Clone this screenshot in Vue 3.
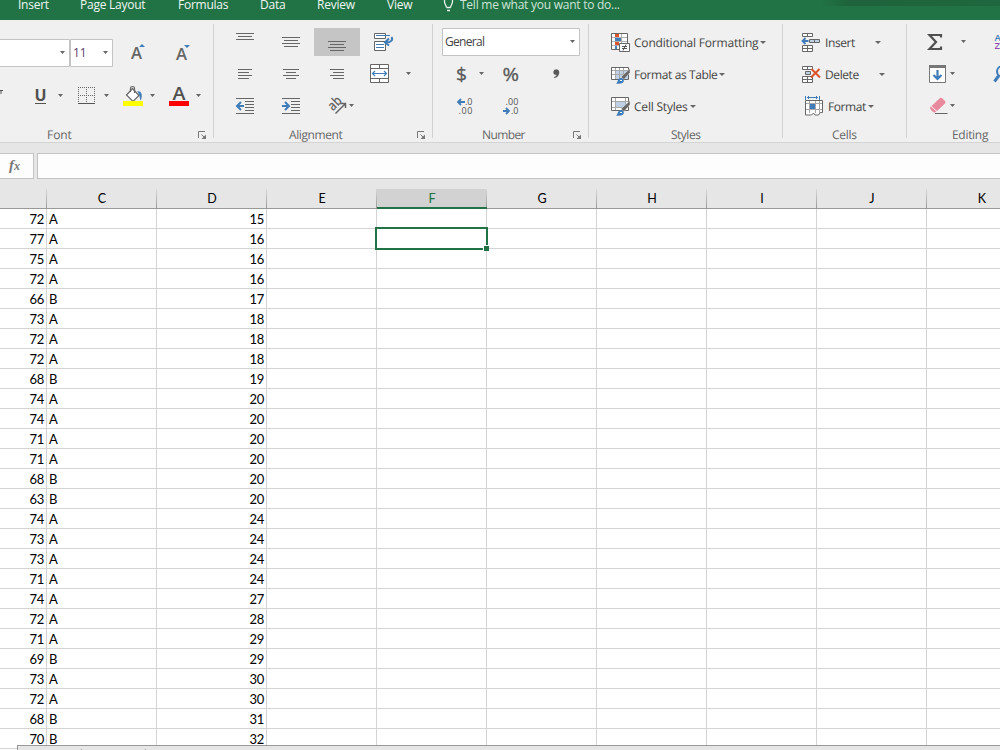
<script setup>
const tabs = [
  { name: 'Insert', w: 62 },
  { name: 'Page Layout', w: 98 },
  { name: 'Formulas', w: 82 },
  { name: 'Data', w: 57 },
  { name: 'Review', w: 70 },
  { name: 'View', w: 55 },
]
const columns = ['C', 'D', 'E', 'F', 'G', 'H', 'I', 'J', 'K']
const scores = [72, 77, 75, 72, 66, 73, 72, 72, 68, 74, 74, 71, 71, 68, 63, 74, 73, 73, 71, 74, 72, 71, 69, 73, 72, 68, 70]
const ages = [15, 16, 16, 16, 17, 18, 18, 18, 19, 20, 20, 20, 20, 20, 20, 24, 24, 24, 24, 27, 28, 29, 29, 30, 30, 31, 32]
const rows = scores.map((s, i) => ({ score: s, grade: s >= 71 ? 'A' : 'B', age: ages[i] }))
</script>

<template>
  <div class="window">
    <nav class="tabs">
      <span v-for="t in tabs" :key="t.name" :style="{ width: t.w + 'px' }">{{ t.name }}</span>
      <svg class="bulb" width="16" height="20" viewBox="442 0 16 20">
        <path d="M446.500 7.500C446 5 444.500 4 444.500 1.500V-1M450.500 7.500C451 5 452.500 4 452.500 1.500V-1M446.500 7.500h4M447 10.500h3" fill="none" stroke="#e8f2ec" stroke-width="1.300" />
      </svg>
      <span class="tell">Tell me what you want to do...</span>
    </nav>

    <section class="ribbon">
      <div class="group font">
        <svg class="art" width="213" height="102" viewBox="0 20 213 102">
          <g fill="#fff" stroke="#c3c3c3">
            <path d="M-2 39.500H69.500V66.500H-2zM70.500 39.500h42v27h-42z" />
          </g>
          <g class="arrow">
            <path d="M60 51h5l-2.500 3zM103 51h5l-2.500 3zM58 94h5l-2.500 3zM104 94h5l-2.500 3zM150 94h5l-2.500 3zM196 94h5l-2.500 3z" />
          </g>
          <text x="73" y="57" font-size="12" fill="#63406d">11</text>
          <g fill="#666" font-weight="600">
            <text x="131" y="59" font-size="15.500" textLength="11" lengthAdjust="spacingAndGlyphs">A</text>
            <text x="176" y="60" font-size="15.500" textLength="11" lengthAdjust="spacingAndGlyphs">A</text>
          </g>
          <path d="M139 47h6l-3-3zM184 45h6l-3 3z" fill="#3f7cb8" />
          <path d="M0 90.500h3M1 90v4" stroke="#555" fill="none" />
          <text x="34.500" y="101" font-size="16" font-weight="700" fill="#505050" textLength="12" lengthAdjust="spacingAndGlyphs">U</text>
          <path d="M35 103.500h11" stroke="#555" />
          <g fill="none" stroke="#666" stroke-dasharray="1 1" shape-rendering="crispEdges">
            <path d="M78 87.500h17M78 95.500h17M78.500 87v16M86.500 87v16M94.500 87v16" />
          </g>
          <path d="M78 103.500h17" stroke="#555" />
          <path d="M132.500 88.500l6.500 7-6 6-6.500-6.500z" fill="#fff" stroke="#666" stroke-width="1.200" />
          <path d="M130.500 92v-4c0-2 4-2 4 0v5" fill="none" stroke="#666" stroke-width="1.200" />
          <path d="M137.500 91c4 0 5.500 4 3.300 9.500c-1-1-1-4-1.500-5z" fill="#3f7cb8" />
          <path d="M123 101h20v5h-20z" fill="#ff0" />
          <text x="172.500" y="100" font-size="17.500" font-weight="600" fill="#505050" textLength="13" lengthAdjust="spacingAndGlyphs">A</text>
          <path d="M169 101h20v5h-20z" fill="#f00" />
        </svg>
        <footer class="f-font">Font</footer>
        <svg class="launch" width="9" height="9"><path d="M.5 7V.5H7M3.500 3.500l3 3" fill="none" stroke="#777" /><path d="M8 3.500V8H3.500z" fill="#777" /></svg>
      </div>

      <div class="group alignment">
        <svg class="art" width="219" height="102" viewBox="214 20 219 102">
          <path d="M314 28h46v28h-46z" fill="#c5c5c5" />
          <g stroke="#666" fill="none" shape-rendering="crispEdges">
            <path d="M236 33.500h18M238 36.500h14M236 39.500h18" />
            <path d="M282 37.500h18M284 40.500h14M282 43.500h18M284 46.500h14" />
            <path d="M328 41.500h18M330 44.500h14M328 47.500h18M330 50.500h14" />
            <path d="M238 69.500h14M238 72.500h11M238 75.500h14M238 78.500h11" />
            <path d="M283 69.500h16M286 72.500h10M283 75.500h16M286 78.500h10" />
            <path d="M330 69.500h14M333 72.500h11M330 75.500h14M333 78.500h11" />
            <path d="M236 98.500h18M245 101.500h9M245 104.500h9M245 107.500h9M245 110.500h9M236 113.500h18" />
            <path d="M282 98.500h18M291 101.500h9M291 104.500h9M291 107.500h9M291 110.500h9M282 113.500h18" />
          </g>
          <g stroke="#3f7cb8" fill="none" stroke-width="2">
            <path d="M237 106h7M241 102l-4 4 4 4" />
            <path d="M282 106h7M285 102l4 4-4 4" />
          </g>
          <g fill="#fff" stroke="#666">
            <path d="M374.500 33.500h11v5h-11zM374.500 41.500h11v9h-11z" />
            <path d="M370.500 64.500h18v18h-18z" />
            <path d="M370 68.500h19M370 78.500h19M379.500 64v4M379.500 79v4" />
          </g>
          <path d="M376 35.500h14M376 44.500h8M376 47.500h8M372.500 73.500h14M375 71l-2.500 2.500L375 76M384 71l2.500 2.500L384 76" stroke="#3f7cb8" stroke-width="1.200" fill="none" />
          <path d="M391.500 37c2 3-1 5.500-5 5.500M389 38.500l-4 4 4 3" stroke="#3f7cb8" stroke-width="2" fill="none" />
          <g class="arrow"><path d="M406 72h5l-2.500 3zM349 104h5l-2.500 3z" /></g>
          <text transform="translate(333 111.500) rotate(-45)" font-size="14" font-weight="600" fill="#666" textLength="14" lengthAdjust="spacingAndGlyphs">ab</text>
          <path d="M335.500 113.500l9.500-9.500M341 103.500h4.500v4.500" stroke="#666" stroke-width="1.500" fill="none" />
        </svg>
        <footer class="f-align">Alignment</footer>
        <svg class="launch" width="9" height="9"><path d="M.5 7V.5H7M3.500 3.500l3 3" fill="none" stroke="#777" /><path d="M8 3.500V8H3.500z" fill="#777" /></svg>
      </div>

      <div class="group number">
        <svg class="art" width="155" height="102" viewBox="433 20 155 102">
          <path d="M442.500 28.500h137v27h-137z" fill="#fff" stroke="#c3c3c3" />
          <text x="445" y="46" font-size="12" fill="#444" textLength="40">General</text>
          <g class="arrow"><path d="M570 40h5l-2.500 3zM479 72h5l-2.500 3z" /></g>
          <g fill="#595959" stroke="#595959" stroke-width=".3">
            <text x="456" y="80.500" font-size="19" textLength="11" lengthAdjust="spacingAndGlyphs">$</text>
            <text x="502.500" y="80.500" font-size="18.500" textLength="16.500" lengthAdjust="spacingAndGlyphs">%</text>
            <path d="M553.500 72.300a2.800 2.800 0 1 1 5.600 0c0 2.800-1.500 5-4.800 5.700v-.9c1.500-.5 2.200-1.400 2.200-2.400c-1.800.4-3-.6-3-2.400z" />
          </g>
          <g font-size="9" fill="#555">
            <text x="465" y="105" textLength="7.500">.0</text>
            <text x="458.500" y="114" textLength="14">.00</text>
            <text x="505.500" y="105" textLength="13">.00</text>
            <text x="511" y="114" textLength="7.500">.0</text>
          </g>
          <path d="M458 102h7M461 99l-3 3 3 3M503 111h6M506 108l3 3-3 3" fill="none" stroke="#3f7cb8" stroke-width="1.800" />
        </svg>
        <footer class="f-number">Number</footer>
        <svg class="launch" width="9" height="9"><path d="M.5 7V.5H7M3.500 3.500l3 3" fill="none" stroke="#777" /><path d="M8 3.500V8H3.500z" fill="#777" /></svg>
      </div>

      <div class="group styles">
        <div class="cmd">
          <svg width="22" height="32" viewBox="610 26 22 32">
            <path d="M611.500 33.500h16v16h-16z" fill="#fff" stroke="#666" />
            <path d="M612 37.500h15M612 41.500h15M612 45.500h15M615.500 34v15M621.500 34v15" stroke="#b0b0b0" />
            <path d="M615 34h4v3h-4zM615 42h4v3h-4z" fill="#d9532c" /><path d="M615 38h6v3h-6zM615 46h2v3h-2z" fill="#3f7cb8" />
            <path d="M619.500 43.500h10v8h-10z" fill="#fff" stroke="#666" />
            <path d="M622 46.500h5M622 48.500h5M626 44.500l-3 6" stroke="#555" fill="none" />
          </svg>
          <span class="t1">Conditional Formatting</span><i class="chev"></i>
        </div>
        <div class="cmd">
          <svg width="22" height="32" viewBox="610 58 22 32">
            <path d="M611.500 67.500h17v12h-17z" fill="#fff" stroke="#666" />
            <path d="M616 71h12v8h-12z" fill="#bdd0e6" />
            <path d="M612 70.500h16M612 74.500h16M615.500 68v11M619.500 68v11M623.500 68v11" stroke="#a8a8a8" />
            <path d="M630 68.500v4l-6 7-3-2.500z" fill="#666" stroke="#f0f0f0" stroke-width=".5" />
            <path d="M616 83.500c2-1 1.500-5.500 5-5.500c3.500 0 3.500 4 1.500 5s-4.500.8-6.500.5z" fill="#3f7cb8" /><path d="M620 80.500h2" stroke="#fff" />
          </svg>
          <span class="t2">Format as Table</span><i class="chev"></i>
        </div>
        <div class="cmd">
          <svg width="22" height="32" viewBox="610 90 22 32">
            <path d="M611.500 97.500h17v13h-17z" fill="#fff" stroke="#666" />
            <path d="M612 101.500h16M612 107.500h16M615.500 98v12M625.500 98v12" stroke="#a8a8a8" />
            <path d="M616 102h9v5h-9z" fill="#bdd0e6" />
            <path d="M630 100.500v4l-6 7-3-2.500z" fill="#666" stroke="#f0f0f0" stroke-width=".5" />
            <path d="M616 115.500c2-1 1.500-5.500 5-5.500c3.500 0 3.500 4 1.500 5s-4.500.8-6.500.5z" fill="#3f7cb8" /><path d="M620 112.500h2" stroke="#fff" />
          </svg>
          <span class="t3">Cell Styles</span><i class="chev"></i>
        </div>
        <footer class="f-styles">Styles</footer>
      </div>

      <div class="group cells">
        <div class="cmd">
          <svg width="24" height="32" viewBox="800 26 24 32">
            <g fill="#fff" stroke="#666"><path d="M802.500 33.500h10v3h-10zM807.500 33v4M802.500 45.500h10v6h-10zM802 48.500h11M807.500 45v7" /><path d="M809.500 39.500h10v3h-10z" fill="#bdd0e6" /><path d="M814.500 39v4" /></g>
            <path d="M802.500 41h6M805.500 38l-3 3 3 3" fill="none" stroke="#3f7cb8" stroke-width="1.800" />
          </svg>
          <span class="t4">Insert</span><i class="chev far"></i>
        </div>
        <div class="cmd">
          <svg width="24" height="32" viewBox="800 58 24 32">
            <g fill="#fff" stroke="#666"><path d="M802.500 66.500h10v3h-10zM807.500 66v4M802.500 76.500h10v6h-10zM802 79.500h11M807.500 76v7" /><path d="M805.500 71.500h5v3h-5z" fill="#bdd0e6" /></g>
            <path d="M811.500 69l8.500 8.500M819.500 69l-8.500 8.500" stroke="#d9532c" stroke-width="2" />
          </svg>
          <span class="t5">Delete</span><i class="chev far"></i>
        </div>
        <div class="cmd">
          <svg width="27" height="32" viewBox="800 90 27 32">
            <path d="M805.500 96v4M819.500 96v4M807 97.500h11M809 96l-1.500 1.500 1.500 1.500M816 96l1.500 1.500-1.500 1.500" stroke="#3f7cb8" fill="none" />
            <path d="M805.500 100.500h17v12h-2l-2 2.500h-3.500l-1.500-2l-2 2h-6z" fill="#fff" stroke="#666" />
            <path d="M806 103.500h16M806 109.500h16M809.500 101v12M815.500 101v12M819.500 101v12" stroke="#a8a8a8" />
            <path d="M810 104h5v5h-5z" fill="#3f7cb8" />
          </svg>
          <span class="t6">Format</span><i class="chev"></i>
        </div>
        <footer class="f-cells">Cells</footer>
      </div>

      <div class="group editing">
        <svg class="art" width="93" height="102" viewBox="907 20 93 102">
          <path d="M941 37.500v-2.500H929.500l6.500 7-6.500 7h11.500V46.500" fill="none" stroke="#505050" stroke-width="2.200" />
          <g class="arrow"><path d="M961 40h5l-2.500 3zM950 72h5l-2.500 3zM950 104h5l-2.500 3z" /></g>
          <path d="M929.500 66.500h16v16h-16z" fill="#fff" stroke="#777" /><path d="M929 65h17v3h-17z" fill="#777" />
          <path d="M937.500 70v8M933.500 75l4 4 4-4" fill="none" stroke="#3f7cb8" stroke-width="2.200" />
          <path d="M939.500 98.500q1.500-1.500 3 0l2.500 2.500q1 1.300 0 2.500l-8 7.500-5.500-5z" fill="#e8899d" />
          <path d="M930.800 106.500l5.500 5-1 .8q-1.200.7-2.500-.5l-2-2q-1-1.200-.5-2.500z" fill="#e8899d" />
          <path d="M935 113.500h12.500" stroke="#666" />
          <text x="994.500" y="41" font-size="9.500" font-weight="600" fill="#3f7cb8">A</text>
          <text x="994.500" y="49" font-size="9.500" font-weight="600" fill="#8e4fae">Z</text>
          <circle cx="1002" cy="71.500" r="5" fill="none" stroke="#3f7cb8" stroke-width="2" /><path d="M998.500 76l-4 5.500" stroke="#3f7cb8" stroke-width="3" />
        </svg>
        <footer class="f-editing">Editing</footer>
      </div>
    </section>

    <div class="formula-row">
      <div class="fx"><i>f</i><b>x</b></div>
      <div class="formula"></div>
    </div>

    <div class="sheet">
      <div class="line head">
        <div class="cell"></div>
        <div v-for="c in columns" :key="c" class="cell" :class="{ active: c === 'F' }">{{ c }}</div>
      </div>
      <div v-for="(r, i) in rows" :key="i" class="line">
        <div class="cell num">{{ r.score }}</div>
        <div class="cell">{{ r.grade }}</div>
        <div class="cell num">{{ r.age }}</div>
        <div v-for="n in 7" :key="n" class="cell"></div>
      </div>
      <div class="selection"><b></b></div>
    </div>
    <div class="sheet-tabs"><i></i><i></i></div>
  </div>
</template>

<style>
body { margin: 0; overflow: hidden; }
</style>

<style scoped>
.window { position: relative; width: 1000px; height: 750px; overflow: hidden; background: #fff; font-family: "Open Sans", "Noto Sans", sans-serif; font-size: 12px; color: #444; }
.tabs { height: 20px; box-sizing: border-box; padding-left: 18px; display: flex; color: #f0f6f2; background: linear-gradient(90deg, transparent 820px, #1e633b 850px, #1f673e) 0 0 / 100% 6px no-repeat, #217346; letter-spacing: -.25px; }
.tabs span { line-height: 17px; margin-top: -4px; white-space: nowrap; flex: none; }
.bulb { flex: none; }
.tabs .tell { margin-left: 2px; color: #cfe3d7; }
.ribbon { display: flex; height: 122px; background: #f0f0f0; border-bottom: 1px solid #d4d4d4; box-sizing: content-box; }
.group { position: relative; box-sizing: border-box; flex: none; height: 122px; }
.group::after { content: ""; position: absolute; right: 0; top: 4px; width: 1px; height: 114px; background: #d2d2d2; }
.font { width: 214px; }
.alignment { width: 219px; }
.number { width: 156px; }
.styles { width: 194px; padding: 6px 0 0 21px; }
.cells { width: 124px; padding: 6px 0 0 17px; }
.editing { width: 93px; }
.editing::after { display: none; }
.alignment .art { margin-left: 0; }
.art { display: block; }
.arrow { fill: #666; }
footer { height: 20px; line-height: 20px; margin-top: 3px; color: #666; letter-spacing: -.05px; white-space: nowrap; }
.f-font { padding-left: 47px; }
.f-align { padding-left: 75px; letter-spacing: -.4px; }
.f-number { padding-left: 49px; letter-spacing: -.6px; }
.f-styles { padding-left: 61px; letter-spacing: -.5px; }
.f-cells { padding-left: 32px; letter-spacing: -.3px; }
.f-editing { padding-left: 45px; letter-spacing: -.3px; }
.f-font, .f-align, .f-number, .f-styles, .f-cells, .f-editing { text-rendering: geometricPrecision; }
.launch { position: absolute; right: 7px; bottom: 2px; }
.cmd { height: 32px; display: flex; align-items: center; white-space: nowrap; }
.cmd svg { flex: none; }
.cmd span { margin-left: 2px; line-height: 20px; margin-top: 2px; letter-spacing: -.2px; text-rendering: geometricPrecision; }
.cmd .t2 { letter-spacing: -.4px; }
.cells .cmd span { margin-left: 1px; letter-spacing: -.4px; }
.chev { border: 3px solid transparent; border-top: 3px solid #666; border-bottom: 0; margin-left: 2px; }
.far { margin-left: 20px; }
.formula-row { height: 46px; background: #e6e6e6; display: flex; padding-top: 10px; box-sizing: border-box; }
.fx { width: 34px; height: 26px; box-sizing: border-box; background: #fdfdfd; border: 1px solid #c3c3c3; border-left: 0; padding-left: 9px; font: italic 700 15px/22px "Liberation Serif", serif; color: #777; }
.fx b { font-size: 12px; }
.formula { flex: 1; height: 26px; box-sizing: border-box; margin-left: 3px; border: 1px solid #c3c3c3; border-right: 0; background: #fdfdfd; }
.sheet { position: relative; color: #000; font-family: Lato, sans-serif; font-size: 13px; }
.line { display: grid; grid-template-columns: 47px repeat(9, 110px); height: 20px; }
.cell { box-sizing: border-box; height: 20px; line-height: 20px; padding: 0 2px; border-right: 1px solid #d4d4d4; border-bottom: 1px solid #d4d4d4; }
.num { text-align: right; letter-spacing: -.3px; }
.head { background: #e6e6e6; }
.head .cell { text-align: center; line-height: 19px; font-size: 12.5px; border-bottom-color: #999; border-right: 0; background: linear-gradient(#d8d8d8, #999) right / 1px 100% no-repeat; }
.head .active { background-color: #d2d2d2; color: #217346; border-bottom: 2px solid #217346; }
.selection { position: absolute; left: 375px; top: 38px; width: 109px; height: 19px; border: 2px solid #217346; }
.selection b { position: absolute; right: -3px; bottom: -3px; width: 5px; height: 5px; border: 1px solid #fff; border-right: 0; border-bottom: 0; background: #217346; }
.sheet-tabs { position: absolute; left: 17px; right: 0; bottom: 0; height: 4px; border-top: 1px solid #999; border-left: 1px solid #999; background: #e6e6e6; }
.sheet-tabs i { float: left; width: 63px; height: 1px; margin-top: 3px; border-right: 1px solid #999; }
</style>
